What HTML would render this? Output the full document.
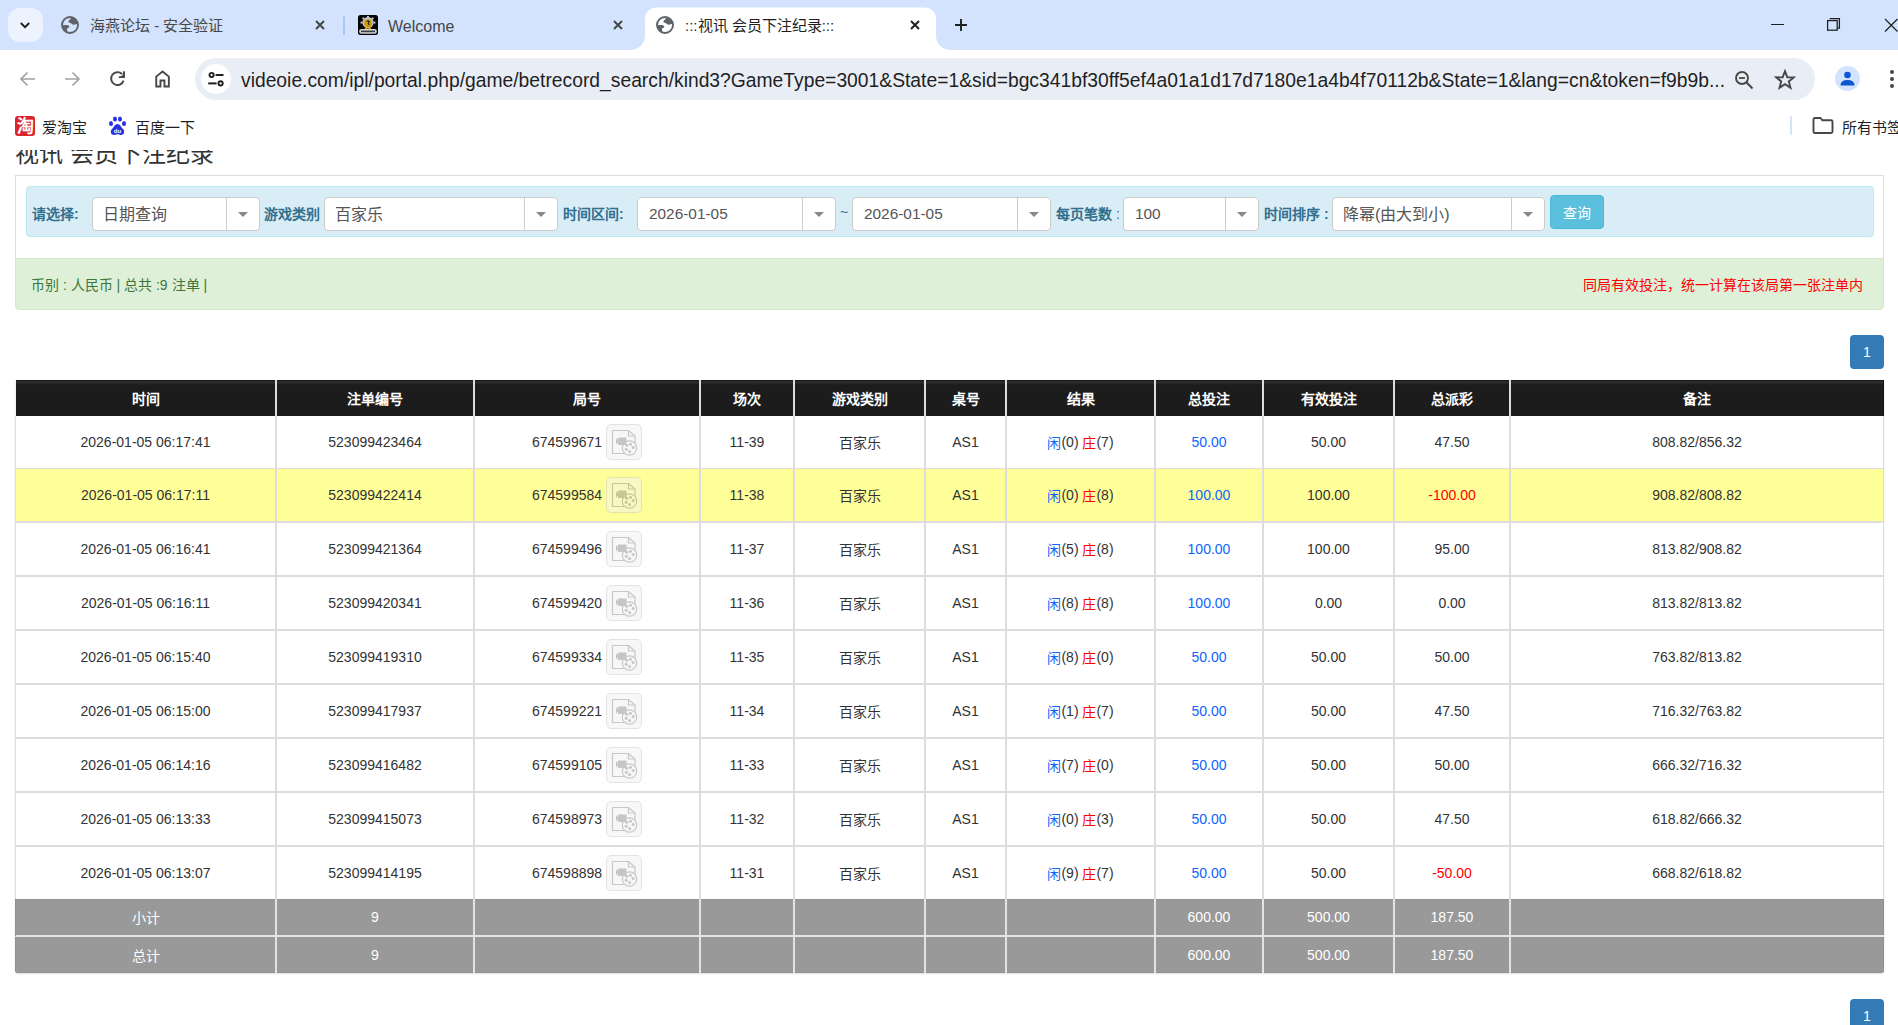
<!DOCTYPE html>
<html lang="zh-CN"><head><meta charset="utf-8">
<style>
*{box-sizing:border-box;margin:0;padding:0}
html,body{width:1898px;height:1025px;overflow:hidden;background:#fff;font-family:"Liberation Sans",sans-serif;position:relative}
.a{position:absolute}
/* chrome */
#tabs{left:0;top:0;width:1898px;height:50px;background:#d3e3fd}
.tabtxt{font-size:14px;color:#1f1f1f;white-space:nowrap}
#toolbar{left:0;top:50px;width:1898px;height:100px;background:#fff}
#omni{left:195px;top:58px;width:1620px;height:42px;border-radius:21px;background:#e9eef6}
#url{left:241px;top:70px;font-size:19.3px;color:#1f1f1f;white-space:nowrap;letter-spacing:0}
/* page */
#page{left:0;top:150px;width:1898px;height:875px;overflow:hidden;background:#fff}
.lbl{font-size:14px;font-weight:bold;color:#31708f;white-space:nowrap}
.sel{background:#fff;border:1px solid #ccc;border-radius:4px;height:34px}
.sel .t{position:absolute;left:10.5px;top:6.5px;font-size:15.4px;color:#555;white-space:nowrap}
.sel .d{position:absolute;top:0;bottom:0;border-left:1px solid #ccc}
.sel .car{position:absolute;width:0;height:0;border-left:5px solid transparent;border-right:5px solid transparent;border-top:5px solid #888}
/* table */
#tbl{left:15px;top:230px;width:1869px}
.row{display:flex;position:relative}
.c{flex:none;display:flex;align-items:center;justify-content:center;font-size:14px;color:#333;white-space:nowrap;border-right:2px solid #ddd}
.c:last-child{border-right:1px solid #ddd}
.hd .c{height:36px;color:#fff;font-weight:bold;background:linear-gradient(#161616 0,#161616 1px,#2c2c2c 1px,#2a2a2a 3px,#1c1c1c 5px);border-right-color:#ddd}
.hd .c:last-child{border-right-color:#111}.gr .c:last-child{border-right-color:#909090}
.hd .c>span{position:relative;top:-0.5px}.gr .c>span{position:relative;top:-0.5px}
.w1{width:261px}.w2{width:198px}.w3{width:226px}.w4{width:94px}.w5{width:131px}.w6{width:81px}.w7{width:149px}.w8{width:108px}.w9{width:131px}.w10{width:116px}.w11{width:373px}
.bl{color:#0a66ff}.rd{color:#ff0000}
.gr{background:#999}.gr .c{color:#fff;border-right-color:#e3e3e3}
.in{display:flex;align-items:center;white-space:pre}
.row{background:#fff}.row.yl{background:#ffff99}.gr{background:#999!important}
.vid{display:block;flex:none;width:36px;height:36px;margin-left:4px;border:1px solid #c8c8c8;border-radius:5px;background:#f1f1f1;position:relative;opacity:.5}
</style></head><body>
<!-- TAB STRIP -->

<div id="tabs" class="a"></div>
<div class="a" style="left:8px;top:8px;width:35px;height:34px;border-radius:12px;background:#ecf2fe"></div>
<svg class="a" style="left:19px;top:19px" width="12" height="12" viewBox="0 0 12 12"><path d="M1.8,4 L6,8.2 L10.2,4" fill="none" stroke="#1f1f1f" stroke-width="1.9"/></svg>
<div class="a" style="left:61px;top:16px"><svg width="18" height="18" viewBox="0 0 18 18"><circle cx="9" cy="9" r="8" fill="none" stroke="#5f6368" stroke-width="1.9"/><path d="M10.2,1.3 C10,2.8 9.2,3.5 8.2,4.2 C7,5 7.2,6.7 8.8,6.8 C10.4,6.9 10.6,8.6 12.4,8.7 C14,8.8 15.2,8.2 16.6,7.8 L16.6,6 A8,8 0 0 0 10.2,1.3 Z" fill="#5f6368"/><path d="M1.2,9.4 C3,8.9 5.8,8.8 7.4,9.5 C8.9,10.2 8.4,12 6.9,12.1 C5.9,12.2 5.9,13.6 6.3,15.2 L6.5,16.6 A8,8 0 0 1 1.2,9.4 Z" fill="#5f6368"/></svg></div>
<div class="a tabtxt" style="left:90px;top:13.5px;font-size:15px;color:#474747">海燕论坛 - 安全验证</div>
<div class="a" style="left:314px;top:17px"><svg width="12" height="12" viewBox="0 0 12 12"><path d="M2,2 L10,10 M10,2 L2,10" stroke="#474747" stroke-width="2"/></svg></div>
<div class="a" style="left:343px;top:16px;width:2px;height:19px;border-radius:1px;background:#a8c7fa"></div>
<svg class="a" style="left:358px;top:15px" width="20" height="20" viewBox="0 0 20 20"><rect x="0" y="0" width="20" height="20" rx="2.5" fill="#050505"/><g fill="#c4c4c4"><circle cx="10" cy="7.6" r="5.6"/><rect x="9" y="0.9" width="2" height="2"/><rect x="2.6" y="6.6" width="2" height="2"/><rect x="15.4" y="6.6" width="2" height="2"/><rect x="4.4" y="2.4" width="2" height="2" transform="rotate(45 5.4 3.4)"/><rect x="13.6" y="2.4" width="2" height="2" transform="rotate(45 14.6 3.4)"/></g><circle cx="10" cy="8.3" r="4" fill="#c99a10"/><path d="M8.6,6.2 Q10.6,5.2 11.2,6.8 Q9.2,8 11.4,10" stroke="#2a2000" stroke-width="1.1" fill="none"/><circle cx="8.2" cy="13.2" r="1.3" fill="#e0a000"/><circle cx="11.8" cy="13.2" r="1.3" fill="#e0a000"/><rect x="1.2" y="14" width="17.6" height="4.8" rx="2" fill="#cfcfcf"/><rect x="3" y="15.6" width="14" height="1.6" fill="#3a3a3a"/></svg>
<div class="a tabtxt" style="left:388px;top:18px;font-size:16px;color:#474747">Welcome</div>
<div class="a" style="left:612px;top:17px"><svg width="12" height="12" viewBox="0 0 12 12"><path d="M2,2 L10,10 M10,2 L2,10" stroke="#474747" stroke-width="2"/></svg></div>
<svg class="a" style="left:630px;top:7px" width="322" height="43" viewBox="0 0 322 43"><path d="M0,43 C8,43 15,37 15,29 V12 C15,5 20,0.5 27,0.5 H294 C301,0.5 306,5 306,12 V29 C306,37 313,43 321,43 Z" fill="#fff"/></svg>
<div class="a" style="left:656px;top:16px"><svg width="18" height="18" viewBox="0 0 18 18"><circle cx="9" cy="9" r="8" fill="none" stroke="#5f6368" stroke-width="1.9"/><path d="M10.2,1.3 C10,2.8 9.2,3.5 8.2,4.2 C7,5 7.2,6.7 8.8,6.8 C10.4,6.9 10.6,8.6 12.4,8.7 C14,8.8 15.2,8.2 16.6,7.8 L16.6,6 A8,8 0 0 0 10.2,1.3 Z" fill="#5f6368"/><path d="M1.2,9.4 C3,8.9 5.8,8.8 7.4,9.5 C8.9,10.2 8.4,12 6.9,12.1 C5.9,12.2 5.9,13.6 6.3,15.2 L6.5,16.6 A8,8 0 0 1 1.2,9.4 Z" fill="#5f6368"/></svg></div>
<div class="a tabtxt" style="left:685px;top:13.5px;font-size:15px;color:#1f1f1f">:::视讯 会员下注纪录:::</div>
<div class="a" style="left:909px;top:17px"><svg width="12" height="12" viewBox="0 0 12 12"><path d="M2,2 L10,10 M10,2 L2,10" stroke="#1f1f1f" stroke-width="2"/></svg></div>
<svg class="a" style="left:954px;top:18px" width="14" height="14" viewBox="0 0 14 14"><path d="M7,1 V13 M1,7 H13" stroke="#1f1f1f" stroke-width="1.9"/></svg>
<div class="a" style="left:1771px;top:24px;width:13px;height:1.3px;background:#1f1f1f"></div>
<svg class="a" style="left:1826px;top:17px" width="15" height="15" viewBox="0 0 15 15"><rect x="1.6" y="3.6" width="9.6" height="9.6" fill="none" stroke="#1f1f1f" stroke-width="1.25"/><path d="M3.6,1.6 H13.4 V11.2 H11.2" fill="none" stroke="#1f1f1f" stroke-width="1.25"/></svg>
<svg class="a" style="left:1884px;top:17.5px" width="14" height="14" viewBox="0 0 14 14"><path d="M1,1 L13.5,13.5 M13.5,1 L1,13.5" stroke="#1f1f1f" stroke-width="1.2"/></svg>
<div id="toolbar" class="a"></div>
<svg class="a" style="left:18px;top:69px" width="20" height="20" viewBox="0 0 20 20"><path d="M17,10 H3.5 M9.5,3.5 L3,10 L9.5,16.5" fill="none" stroke="#a3a3a3" stroke-width="1.7"/></svg>
<svg class="a" style="left:62px;top:69px" width="20" height="20" viewBox="0 0 20 20"><path d="M3,10 H16.5 M10.5,3.5 L17,10 L10.5,16.5" fill="none" stroke="#a3a3a3" stroke-width="1.7"/></svg>
<svg class="a" style="left:107px;top:69px" width="20" height="20" viewBox="0 0 20 20"><path d="M16.6,11.6 A6.4,6.4 0 1 1 15.2,5.2" fill="none" stroke="#474747" stroke-width="1.9"/><path d="M17,2.2 V8.1 H11.8" fill="none" stroke="#474747" stroke-width="1.9"/><path d="M17,4.6 V8.1 H13.5 Z" fill="#474747"/></svg>
<svg class="a" style="left:152px;top:69px" width="20" height="20" viewBox="0 0 20 20"><path d="M4.25,17.45 V7.6 L10.55,2.5 L16.85,7.6 V17.45 H12.45 V11.55 H8.45 V17.45 Z" fill="none" stroke="#474747" stroke-width="1.9" stroke-linejoin="miter"/></svg>
<div id="omni" class="a"></div>
<div class="a" style="left:201px;top:64px;width:30px;height:30px;border-radius:15px;background:#fff"></div>
<svg class="a" style="left:206px;top:71px" width="20" height="18" viewBox="0 0 20 18"><circle cx="5.6" cy="4" r="2.1" fill="none" stroke="#1f1f1f" stroke-width="1.9"/><path d="M9.6,4 H17.5" stroke="#1f1f1f" stroke-width="2"/><circle cx="14.6" cy="12.4" r="2.1" fill="none" stroke="#1f1f1f" stroke-width="1.9"/><path d="M2.2,12.4 H10.6" stroke="#1f1f1f" stroke-width="2"/></svg>
<div id="url" class="a">videoie.com/ipl/portal.php/game/betrecord_search/kind3?GameType=3001&amp;State=1&amp;sid=bgc341bf30ff5ef4a01a1d17d7180e1a4b4f70112b&amp;State=1&amp;lang=cn&amp;token=f9b9b...</div>
<svg class="a" style="left:1733px;top:68.5px" width="22" height="22" viewBox="0 0 22 22"><circle cx="9" cy="9" r="6" fill="none" stroke="#474747" stroke-width="1.9"/><path d="M6,9 H12" stroke="#474747" stroke-width="1.8"/><path d="M13.3,13.3 L19.5,19.5" stroke="#474747" stroke-width="2"/></svg>
<svg class="a" style="left:1774px;top:69px" width="22" height="22" viewBox="0 0 22 22"><path d="M11,2.2 L13.3,8.2 L19.8,8.4 L14.8,12.4 L16.5,18.8 L11,15.2 L5.5,18.8 L7.2,12.4 L2.2,8.4 L8.7,8.2 Z" fill="none" stroke="#474747" stroke-width="1.9" stroke-linejoin="miter"/></svg>
<div class="a" style="left:1835px;top:66px;width:25px;height:25px;border-radius:13px;background:#d3e3fd"></div>
<svg class="a" style="left:1838px;top:69px" width="19" height="19" viewBox="0 0 19 19"><circle cx="9.5" cy="6" r="3.3" fill="#0b57d0"/><path d="M2.5,16.5 Q2.5,11 9.5,11 Q16.5,11 16.5,16.5 Z" fill="#0b57d0"/></svg>
<div class="a" style="left:1890px;top:70px;width:4px;height:4px;border-radius:2px;background:#474747"></div>
<div class="a" style="left:1890px;top:77px;width:4px;height:4px;border-radius:2px;background:#474747"></div>
<div class="a" style="left:1890px;top:84px;width:4px;height:4px;border-radius:2px;background:#474747"></div>
<!-- bookmarks -->
<div class="a" style="left:15px;top:116px;width:20px;height:20px;border-radius:3px;background:#d9252b"></div>
<div class="a" style="left:15px;top:116px;width:20px;height:20px;font-size:17px;font-weight:bold;color:#fff;display:flex;align-items:center;justify-content:center;line-height:1">淘</div>
<div class="a tabtxt" style="left:42px;top:115.5px;font-size:15px;color:#1f1f1f">爱淘宝</div>
<svg class="a" style="left:108px;top:116px" width="19" height="20" viewBox="0 0 19 20"><ellipse cx="3" cy="7.5" rx="2" ry="2.6" fill="#2932e1"/><ellipse cx="7" cy="3" rx="2" ry="2.6" fill="#2932e1"/><ellipse cx="12" cy="3" rx="2" ry="2.6" fill="#2932e1"/><ellipse cx="16" cy="7.5" rx="2" ry="2.6" fill="#2932e1"/><path d="M9.5,8 C7,8 6,11 4,13 C2,15 2.5,19 6,19 C8,19 8.5,18.3 9.5,18.3 C10.5,18.3 11,19 13,19 C16.5,19 17,15 15,13 C13,11 12,8 9.5,8 Z" fill="#2932e1"/><text x="9.5" y="17" font-size="6" fill="#fff" text-anchor="middle" font-family="Liberation Sans" font-weight="bold">du</text></svg>
<div class="a tabtxt" style="left:135px;top:115.5px;font-size:15px;color:#1f1f1f">百度一下</div>
<div class="a" style="left:1790px;top:116px;width:2px;height:19px;border-radius:1px;background:#d3e3fd"></div>
<svg class="a" style="left:1812px;top:117px" width="22" height="17" viewBox="0 0 22 17"><path d="M1.5,2.5 Q1.5,1 3,1 H8.5 L10.5,3.3 H19 Q20.5,3.3 20.5,4.8 V14.5 Q20.5,16 19,16 H3 Q1.5,16 1.5,14.5 Z" fill="none" stroke="#474747" stroke-width="1.9" stroke-linejoin="round"/></svg>
<div class="a tabtxt" style="left:1842px;top:115.5px;font-size:15px;color:#1f1f1f">所有书签</div>

<!-- PAGE -->
<div class="a" style="left:0;top:150px;width:1898px;height:30px;overflow:hidden">
<div class="a" style="left:15px;top:-16px;font-size:24px;color:#333;white-space:nowrap">视讯 会员下注纪录</div>
</div>
<div class="a" style="left:15px;top:175px;width:1869px;height:84px;border:1px solid #ddd;border-bottom:none"></div>
<div class="a" style="left:26px;top:186px;width:1848px;height:51px;background:#d9edf7;border:1px solid #bce8f1;border-radius:4px"></div>
<div class="a lbl" style="left:32px;top:203px">请选择:</div>
<div class="a sel" style="left:92px;top:197px;width:168px"><div class="t" style="left:10px;font-size:16px;top:3px">日期查询</div><div class="d" style="left:133px"></div><div class="car" style="left:144.5px;top:14px"></div></div>
<div class="a lbl" style="left:264px;top:203px">游戏类别</div>
<div class="a sel" style="left:324px;top:197px;width:234px"><div class="t" style="left:10px;font-size:16px;top:3px">百家乐</div><div class="d" style="left:199px"></div><div class="car" style="left:210.5px;top:14px"></div></div>
<div class="a lbl" style="left:563px;top:203px">时间区间:</div>
<div class="a sel" style="left:637px;top:197px;width:199px"><div class="t" style="left:11px">2026-01-05</div><div class="d" style="left:164px"></div><div class="car" style="left:175.5px;top:14px"></div></div>
<div class="a" style="left:840px;top:204px;font-size:14px;color:#31708f">~</div>
<div class="a sel" style="left:852px;top:197px;width:199px"><div class="t" style="left:11px">2026-01-05</div><div class="d" style="left:164px"></div><div class="car" style="left:175.5px;top:14px"></div></div>
<div class="a lbl" style="left:1056px;top:203px">每页笔数 <span style="font-weight:normal">:</span></div>
<div class="a sel" style="left:1123px;top:197px;width:136px"><div class="t" style="left:11px">100</div><div class="d" style="left:101px"></div><div class="car" style="left:112.5px;top:14px"></div></div>
<div class="a lbl" style="left:1264px;top:203px">时间排序 :</div>
<div class="a sel" style="left:1332px;top:197px;width:213px"><div class="t" style="left:10px;font-size:16px;top:3px">降幂(由大到小)</div><div class="d" style="left:178px"></div><div class="car" style="left:189.5px;top:14px"></div></div>
<div class="a" style="left:1550px;top:195px;width:54px;height:34px;background:#5bc0de;border:1px solid #46b8da;border-radius:4px;color:#fff;font-size:14px;text-align:center;line-height:34px">查询</div>
<div class="a" style="left:15px;top:258px;width:1869px;height:52px;background:#dff0d8;border:1px solid #d6e9c6;border-radius:0 0 4px 4px"></div>
<div class="a" style="left:31px;top:273.5px;font-size:14px;color:#3c763d;white-space:nowrap;word-spacing:0">币别 : 人民币 | 总共 :9 注单 |</div>
<div class="a" style="left:1583px;top:273.5px;font-size:14px;color:#ff0000;white-space:nowrap">同局有效投注，统一计算在该局第一张注单内</div>
<div class="a" style="left:1850px;top:335px;width:34px;height:34px;background:#337ab7;border-radius:4px;color:#fff;font-size:14px;text-align:center;line-height:34px">1</div>
<div class="a" style="left:1850px;top:999px;width:34px;height:34px;background:#337ab7;border-radius:4px;color:#fff;font-size:14px;text-align:center;line-height:34px">1</div>
<!-- TABLE -->
<div class="a" id="tbl" style="left:15px;top:380px;width:1869px;border-radius:0 0 3px 3px;overflow:hidden;box-shadow:0 1px 2px rgba(0,0,0,.12)">
<div class="row hd" style="border-left:1px solid #f4f4f4"><div class="c w1"><span class="in">时间</span></div><div class="c w2"><span class="in">注单编号</span></div><div class="c w3"><span class="in">局号</span></div><div class="c w4"><span class="in">场次</span></div><div class="c w5"><span class="in">游戏类别</span></div><div class="c w6"><span class="in">桌号</span></div><div class="c w7"><span class="in">结果</span></div><div class="c w8"><span class="in">总投注</span></div><div class="c w9"><span class="in">有效投注</span></div><div class="c w10"><span class="in">总派彩</span></div><div class="c w11"><span class="in">备注</span></div></div>
<div class="row" style="height:53px;border-bottom:1px solid #ddd;border-left:1px solid #ddd"><div class="c w1"><span class="in">2026-01-05 06:17:41</span></div><div class="c w2"><span class="in">523099423464</span></div><div class="c w3"><span class="in">674599671<i class="vid"><svg width="34" height="34" viewBox="0 0 34 34" style="position:absolute;left:-1.5px;top:0"><path d="M6.5,5.5 H22.5 L29,11 V18.4" fill="none" stroke="#919191" stroke-width="1.2"/><path d="M22.5,5.5 V11 H29" fill="none" stroke="#919191" stroke-width="1.2"/><path d="M6.5,5.5 V28.5 H18.8" fill="none" stroke="#919191" stroke-width="1.2"/><path d="M10,13 L12,15 V12.5 H20.5 V20 H12 V17.5 L10,19.5 Z" fill="#8f8f8f"/><circle cx="23.5" cy="23" r="7.2" fill="none" stroke="#919191" stroke-width="1.2"/><circle cx="20.8" cy="20.3" r="1.5" fill="#8f8f8f"/><circle cx="24.5" cy="19.2" r="1.5" fill="#8f8f8f"/><circle cx="27.2" cy="22.5" r="1.5" fill="#8f8f8f"/><circle cx="20.2" cy="24.2" r="1.5" fill="#8f8f8f"/><circle cx="23.6" cy="26.6" r="1.5" fill="#8f8f8f"/></svg></i></span></div><div class="c w4"><span class="in">11-39</span></div><div class="c w5"><span class="in">百家乐</span></div><div class="c w6"><span class="in">AS1</span></div><div class="c w7"><span class="in"><span class="bl">闲</span>(0) <span class="rd">庄</span>(7)</span></div><div class="c w8"><span class="in"><span class="bl">50.00</span></span></div><div class="c w9"><span class="in">50.00</span></div><div class="c w10"><span class="in"><span>47.50</span></span></div><div class="c w11"><span class="in">808.82/856.32</span></div></div>
<div class="row yl" style="height:54px;border-bottom:2px solid #ddd;border-left:1px solid #ddd"><div class="c w1"><span class="in">2026-01-05 06:17:11</span></div><div class="c w2"><span class="in">523099422414</span></div><div class="c w3"><span class="in">674599584<i class="vid"><svg width="34" height="34" viewBox="0 0 34 34" style="position:absolute;left:-1.5px;top:0"><path d="M6.5,5.5 H22.5 L29,11 V18.4" fill="none" stroke="#919191" stroke-width="1.2"/><path d="M22.5,5.5 V11 H29" fill="none" stroke="#919191" stroke-width="1.2"/><path d="M6.5,5.5 V28.5 H18.8" fill="none" stroke="#919191" stroke-width="1.2"/><path d="M10,13 L12,15 V12.5 H20.5 V20 H12 V17.5 L10,19.5 Z" fill="#8f8f8f"/><circle cx="23.5" cy="23" r="7.2" fill="none" stroke="#919191" stroke-width="1.2"/><circle cx="20.8" cy="20.3" r="1.5" fill="#8f8f8f"/><circle cx="24.5" cy="19.2" r="1.5" fill="#8f8f8f"/><circle cx="27.2" cy="22.5" r="1.5" fill="#8f8f8f"/><circle cx="20.2" cy="24.2" r="1.5" fill="#8f8f8f"/><circle cx="23.6" cy="26.6" r="1.5" fill="#8f8f8f"/></svg></i></span></div><div class="c w4"><span class="in">11-38</span></div><div class="c w5"><span class="in">百家乐</span></div><div class="c w6"><span class="in">AS1</span></div><div class="c w7"><span class="in"><span class="bl">闲</span>(0) <span class="rd">庄</span>(8)</span></div><div class="c w8"><span class="in"><span class="bl">100.00</span></span></div><div class="c w9"><span class="in">100.00</span></div><div class="c w10"><span class="in"><span class="rd">-100.00</span></span></div><div class="c w11"><span class="in">908.82/808.82</span></div></div>
<div class="row" style="height:54px;border-bottom:2px solid #ddd;border-left:1px solid #ddd"><div class="c w1"><span class="in">2026-01-05 06:16:41</span></div><div class="c w2"><span class="in">523099421364</span></div><div class="c w3"><span class="in">674599496<i class="vid"><svg width="34" height="34" viewBox="0 0 34 34" style="position:absolute;left:-1.5px;top:0"><path d="M6.5,5.5 H22.5 L29,11 V18.4" fill="none" stroke="#919191" stroke-width="1.2"/><path d="M22.5,5.5 V11 H29" fill="none" stroke="#919191" stroke-width="1.2"/><path d="M6.5,5.5 V28.5 H18.8" fill="none" stroke="#919191" stroke-width="1.2"/><path d="M10,13 L12,15 V12.5 H20.5 V20 H12 V17.5 L10,19.5 Z" fill="#8f8f8f"/><circle cx="23.5" cy="23" r="7.2" fill="none" stroke="#919191" stroke-width="1.2"/><circle cx="20.8" cy="20.3" r="1.5" fill="#8f8f8f"/><circle cx="24.5" cy="19.2" r="1.5" fill="#8f8f8f"/><circle cx="27.2" cy="22.5" r="1.5" fill="#8f8f8f"/><circle cx="20.2" cy="24.2" r="1.5" fill="#8f8f8f"/><circle cx="23.6" cy="26.6" r="1.5" fill="#8f8f8f"/></svg></i></span></div><div class="c w4"><span class="in">11-37</span></div><div class="c w5"><span class="in">百家乐</span></div><div class="c w6"><span class="in">AS1</span></div><div class="c w7"><span class="in"><span class="bl">闲</span>(5) <span class="rd">庄</span>(8)</span></div><div class="c w8"><span class="in"><span class="bl">100.00</span></span></div><div class="c w9"><span class="in">100.00</span></div><div class="c w10"><span class="in"><span>95.00</span></span></div><div class="c w11"><span class="in">813.82/908.82</span></div></div>
<div class="row" style="height:54px;border-bottom:2px solid #ddd;border-left:1px solid #ddd"><div class="c w1"><span class="in">2026-01-05 06:16:11</span></div><div class="c w2"><span class="in">523099420341</span></div><div class="c w3"><span class="in">674599420<i class="vid"><svg width="34" height="34" viewBox="0 0 34 34" style="position:absolute;left:-1.5px;top:0"><path d="M6.5,5.5 H22.5 L29,11 V18.4" fill="none" stroke="#919191" stroke-width="1.2"/><path d="M22.5,5.5 V11 H29" fill="none" stroke="#919191" stroke-width="1.2"/><path d="M6.5,5.5 V28.5 H18.8" fill="none" stroke="#919191" stroke-width="1.2"/><path d="M10,13 L12,15 V12.5 H20.5 V20 H12 V17.5 L10,19.5 Z" fill="#8f8f8f"/><circle cx="23.5" cy="23" r="7.2" fill="none" stroke="#919191" stroke-width="1.2"/><circle cx="20.8" cy="20.3" r="1.5" fill="#8f8f8f"/><circle cx="24.5" cy="19.2" r="1.5" fill="#8f8f8f"/><circle cx="27.2" cy="22.5" r="1.5" fill="#8f8f8f"/><circle cx="20.2" cy="24.2" r="1.5" fill="#8f8f8f"/><circle cx="23.6" cy="26.6" r="1.5" fill="#8f8f8f"/></svg></i></span></div><div class="c w4"><span class="in">11-36</span></div><div class="c w5"><span class="in">百家乐</span></div><div class="c w6"><span class="in">AS1</span></div><div class="c w7"><span class="in"><span class="bl">闲</span>(8) <span class="rd">庄</span>(8)</span></div><div class="c w8"><span class="in"><span class="bl">100.00</span></span></div><div class="c w9"><span class="in">0.00</span></div><div class="c w10"><span class="in"><span>0.00</span></span></div><div class="c w11"><span class="in">813.82/813.82</span></div></div>
<div class="row" style="height:54px;border-bottom:2px solid #ddd;border-left:1px solid #ddd"><div class="c w1"><span class="in">2026-01-05 06:15:40</span></div><div class="c w2"><span class="in">523099419310</span></div><div class="c w3"><span class="in">674599334<i class="vid"><svg width="34" height="34" viewBox="0 0 34 34" style="position:absolute;left:-1.5px;top:0"><path d="M6.5,5.5 H22.5 L29,11 V18.4" fill="none" stroke="#919191" stroke-width="1.2"/><path d="M22.5,5.5 V11 H29" fill="none" stroke="#919191" stroke-width="1.2"/><path d="M6.5,5.5 V28.5 H18.8" fill="none" stroke="#919191" stroke-width="1.2"/><path d="M10,13 L12,15 V12.5 H20.5 V20 H12 V17.5 L10,19.5 Z" fill="#8f8f8f"/><circle cx="23.5" cy="23" r="7.2" fill="none" stroke="#919191" stroke-width="1.2"/><circle cx="20.8" cy="20.3" r="1.5" fill="#8f8f8f"/><circle cx="24.5" cy="19.2" r="1.5" fill="#8f8f8f"/><circle cx="27.2" cy="22.5" r="1.5" fill="#8f8f8f"/><circle cx="20.2" cy="24.2" r="1.5" fill="#8f8f8f"/><circle cx="23.6" cy="26.6" r="1.5" fill="#8f8f8f"/></svg></i></span></div><div class="c w4"><span class="in">11-35</span></div><div class="c w5"><span class="in">百家乐</span></div><div class="c w6"><span class="in">AS1</span></div><div class="c w7"><span class="in"><span class="bl">闲</span>(8) <span class="rd">庄</span>(0)</span></div><div class="c w8"><span class="in"><span class="bl">50.00</span></span></div><div class="c w9"><span class="in">50.00</span></div><div class="c w10"><span class="in"><span>50.00</span></span></div><div class="c w11"><span class="in">763.82/813.82</span></div></div>
<div class="row" style="height:54px;border-bottom:2px solid #ddd;border-left:1px solid #ddd"><div class="c w1"><span class="in">2026-01-05 06:15:00</span></div><div class="c w2"><span class="in">523099417937</span></div><div class="c w3"><span class="in">674599221<i class="vid"><svg width="34" height="34" viewBox="0 0 34 34" style="position:absolute;left:-1.5px;top:0"><path d="M6.5,5.5 H22.5 L29,11 V18.4" fill="none" stroke="#919191" stroke-width="1.2"/><path d="M22.5,5.5 V11 H29" fill="none" stroke="#919191" stroke-width="1.2"/><path d="M6.5,5.5 V28.5 H18.8" fill="none" stroke="#919191" stroke-width="1.2"/><path d="M10,13 L12,15 V12.5 H20.5 V20 H12 V17.5 L10,19.5 Z" fill="#8f8f8f"/><circle cx="23.5" cy="23" r="7.2" fill="none" stroke="#919191" stroke-width="1.2"/><circle cx="20.8" cy="20.3" r="1.5" fill="#8f8f8f"/><circle cx="24.5" cy="19.2" r="1.5" fill="#8f8f8f"/><circle cx="27.2" cy="22.5" r="1.5" fill="#8f8f8f"/><circle cx="20.2" cy="24.2" r="1.5" fill="#8f8f8f"/><circle cx="23.6" cy="26.6" r="1.5" fill="#8f8f8f"/></svg></i></span></div><div class="c w4"><span class="in">11-34</span></div><div class="c w5"><span class="in">百家乐</span></div><div class="c w6"><span class="in">AS1</span></div><div class="c w7"><span class="in"><span class="bl">闲</span>(1) <span class="rd">庄</span>(7)</span></div><div class="c w8"><span class="in"><span class="bl">50.00</span></span></div><div class="c w9"><span class="in">50.00</span></div><div class="c w10"><span class="in"><span>47.50</span></span></div><div class="c w11"><span class="in">716.32/763.82</span></div></div>
<div class="row" style="height:54px;border-bottom:2px solid #ddd;border-left:1px solid #ddd"><div class="c w1"><span class="in">2026-01-05 06:14:16</span></div><div class="c w2"><span class="in">523099416482</span></div><div class="c w3"><span class="in">674599105<i class="vid"><svg width="34" height="34" viewBox="0 0 34 34" style="position:absolute;left:-1.5px;top:0"><path d="M6.5,5.5 H22.5 L29,11 V18.4" fill="none" stroke="#919191" stroke-width="1.2"/><path d="M22.5,5.5 V11 H29" fill="none" stroke="#919191" stroke-width="1.2"/><path d="M6.5,5.5 V28.5 H18.8" fill="none" stroke="#919191" stroke-width="1.2"/><path d="M10,13 L12,15 V12.5 H20.5 V20 H12 V17.5 L10,19.5 Z" fill="#8f8f8f"/><circle cx="23.5" cy="23" r="7.2" fill="none" stroke="#919191" stroke-width="1.2"/><circle cx="20.8" cy="20.3" r="1.5" fill="#8f8f8f"/><circle cx="24.5" cy="19.2" r="1.5" fill="#8f8f8f"/><circle cx="27.2" cy="22.5" r="1.5" fill="#8f8f8f"/><circle cx="20.2" cy="24.2" r="1.5" fill="#8f8f8f"/><circle cx="23.6" cy="26.6" r="1.5" fill="#8f8f8f"/></svg></i></span></div><div class="c w4"><span class="in">11-33</span></div><div class="c w5"><span class="in">百家乐</span></div><div class="c w6"><span class="in">AS1</span></div><div class="c w7"><span class="in"><span class="bl">闲</span>(7) <span class="rd">庄</span>(0)</span></div><div class="c w8"><span class="in"><span class="bl">50.00</span></span></div><div class="c w9"><span class="in">50.00</span></div><div class="c w10"><span class="in"><span>50.00</span></span></div><div class="c w11"><span class="in">666.32/716.32</span></div></div>
<div class="row" style="height:54px;border-bottom:2px solid #ddd;border-left:1px solid #ddd"><div class="c w1"><span class="in">2026-01-05 06:13:33</span></div><div class="c w2"><span class="in">523099415073</span></div><div class="c w3"><span class="in">674598973<i class="vid"><svg width="34" height="34" viewBox="0 0 34 34" style="position:absolute;left:-1.5px;top:0"><path d="M6.5,5.5 H22.5 L29,11 V18.4" fill="none" stroke="#919191" stroke-width="1.2"/><path d="M22.5,5.5 V11 H29" fill="none" stroke="#919191" stroke-width="1.2"/><path d="M6.5,5.5 V28.5 H18.8" fill="none" stroke="#919191" stroke-width="1.2"/><path d="M10,13 L12,15 V12.5 H20.5 V20 H12 V17.5 L10,19.5 Z" fill="#8f8f8f"/><circle cx="23.5" cy="23" r="7.2" fill="none" stroke="#919191" stroke-width="1.2"/><circle cx="20.8" cy="20.3" r="1.5" fill="#8f8f8f"/><circle cx="24.5" cy="19.2" r="1.5" fill="#8f8f8f"/><circle cx="27.2" cy="22.5" r="1.5" fill="#8f8f8f"/><circle cx="20.2" cy="24.2" r="1.5" fill="#8f8f8f"/><circle cx="23.6" cy="26.6" r="1.5" fill="#8f8f8f"/></svg></i></span></div><div class="c w4"><span class="in">11-32</span></div><div class="c w5"><span class="in">百家乐</span></div><div class="c w6"><span class="in">AS1</span></div><div class="c w7"><span class="in"><span class="bl">闲</span>(0) <span class="rd">庄</span>(3)</span></div><div class="c w8"><span class="in"><span class="bl">50.00</span></span></div><div class="c w9"><span class="in">50.00</span></div><div class="c w10"><span class="in"><span>47.50</span></span></div><div class="c w11"><span class="in">618.82/666.32</span></div></div>
<div class="row" style="height:52px;border-bottom:0px solid #ddd;border-left:1px solid #ddd"><div class="c w1"><span class="in">2026-01-05 06:13:07</span></div><div class="c w2"><span class="in">523099414195</span></div><div class="c w3"><span class="in">674598898<i class="vid"><svg width="34" height="34" viewBox="0 0 34 34" style="position:absolute;left:-1.5px;top:0"><path d="M6.5,5.5 H22.5 L29,11 V18.4" fill="none" stroke="#919191" stroke-width="1.2"/><path d="M22.5,5.5 V11 H29" fill="none" stroke="#919191" stroke-width="1.2"/><path d="M6.5,5.5 V28.5 H18.8" fill="none" stroke="#919191" stroke-width="1.2"/><path d="M10,13 L12,15 V12.5 H20.5 V20 H12 V17.5 L10,19.5 Z" fill="#8f8f8f"/><circle cx="23.5" cy="23" r="7.2" fill="none" stroke="#919191" stroke-width="1.2"/><circle cx="20.8" cy="20.3" r="1.5" fill="#8f8f8f"/><circle cx="24.5" cy="19.2" r="1.5" fill="#8f8f8f"/><circle cx="27.2" cy="22.5" r="1.5" fill="#8f8f8f"/><circle cx="20.2" cy="24.2" r="1.5" fill="#8f8f8f"/><circle cx="23.6" cy="26.6" r="1.5" fill="#8f8f8f"/></svg></i></span></div><div class="c w4"><span class="in">11-31</span></div><div class="c w5"><span class="in">百家乐</span></div><div class="c w6"><span class="in">AS1</span></div><div class="c w7"><span class="in"><span class="bl">闲</span>(9) <span class="rd">庄</span>(7)</span></div><div class="c w8"><span class="in"><span class="bl">50.00</span></span></div><div class="c w9"><span class="in">50.00</span></div><div class="c w10"><span class="in"><span class="rd">-50.00</span></span></div><div class="c w11"><span class="in">668.82/618.82</span></div></div>
<div class="row gr" style="height:38px;border-bottom:2px solid #e3e3e3;border-left:1px solid #909090;box-shadow:inset 0 1px 0 #909090"><div class="c w1"><span class="in">小计</span></div><div class="c w2"><span class="in">9</span></div><div class="c w3"><span class="in"></span></div><div class="c w4"><span class="in"></span></div><div class="c w5"><span class="in"></span></div><div class="c w6"><span class="in"></span></div><div class="c w7"><span class="in"></span></div><div class="c w8"><span class="in">600.00</span></div><div class="c w9"><span class="in">500.00</span></div><div class="c w10"><span class="in">187.50</span></div><div class="c w11"><span class="in"></span></div></div>
<div class="row gr" style="height:36px;border-left:1px solid #909090;box-shadow:inset 0 -1px 0 #909090"><div class="c w1"><span class="in">总计</span></div><div class="c w2"><span class="in">9</span></div><div class="c w3"><span class="in"></span></div><div class="c w4"><span class="in"></span></div><div class="c w5"><span class="in"></span></div><div class="c w6"><span class="in"></span></div><div class="c w7"><span class="in"></span></div><div class="c w8"><span class="in">600.00</span></div><div class="c w9"><span class="in">500.00</span></div><div class="c w10"><span class="in">187.50</span></div><div class="c w11"><span class="in"></span></div></div>
</div>
</body></html>
